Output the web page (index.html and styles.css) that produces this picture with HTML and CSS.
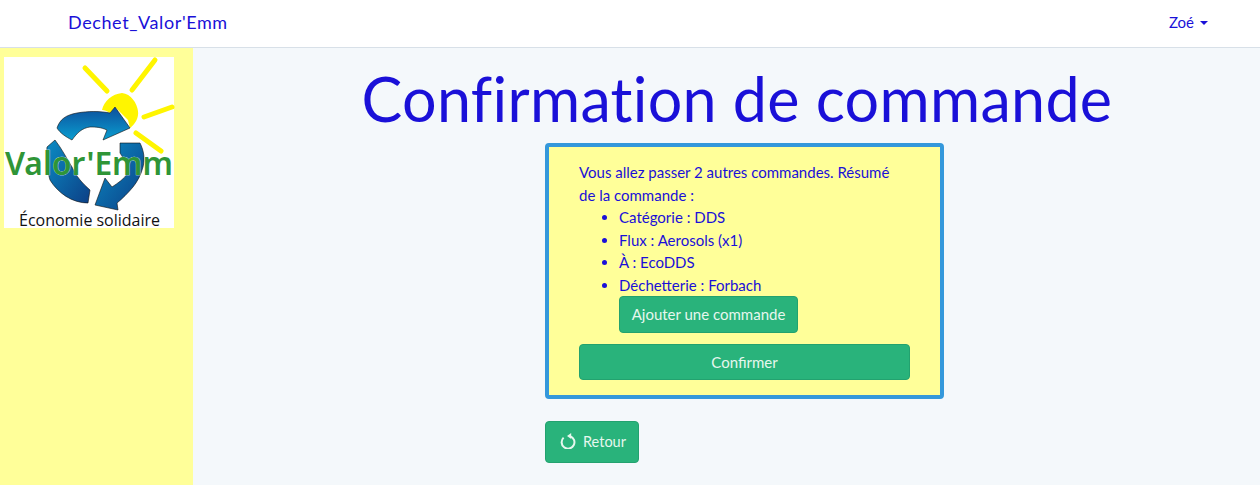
FILE: index.html
```html
<!DOCTYPE html>
<html lang="fr">
<head>
<meta charset="utf-8">
<title>Confirmation de commande</title>
<link rel="stylesheet" href="styles.css">
</head>
<body>
<nav class="navbar">
  <a class="brand" href="#">Dechet_Valor'Emm</a>
  <a class="user" href="#">Zoé <span class="caret"></span></a>
</nav>
<div class="layout">
  <aside class="sidebar">
    <svg class="logo" viewBox="0 0 170 171" role="img" aria-label="Valor'Emm">
      <defs>
        <linearGradient id="blue" x1="0" y1="0" x2="0" y2="1">
          <stop offset="0" stop-color="#0d4f9c"/>
          <stop offset="1" stop-color="#0a9ed0"/>
        </linearGradient>
        <linearGradient id="blue2" x1="0" y1="0" x2="1" y2="1">
          <stop offset="0" stop-color="#0b8cc4"/>
          <stop offset="1" stop-color="#0c3f86"/>
        </linearGradient>
      </defs>
      <rect width="170" height="171" fill="#fff"/>
      <path d="M98 53 C100 44 108 37 118 36 C127 37 133 46 134 54 C135 61 131 67 126 71 L124 63 L111 50 L106 56 C103 54 100 53 98 53Z" fill="#fff500"/>
      <g stroke="#fff500" stroke-width="5" stroke-linecap="round" fill="none">
        <path d="M81 11 L103 34"/>
        <path d="M151 3 L128 33"/>
        <path d="M140 60 L168 50"/>
        <path d="M132 76 L157 94"/>
      </g>
      <path d="M53 71 C56 62 62 58 73 56 C84 54 96 54 106 56 L111 50 L126 71 L99 83 L103 73 C96 70 92 70 86 70 C78 71 73 76 68 83 C62 80 56 76 53 71Z" fill="url(#blue)" stroke="#111" stroke-width=".6"/>
      <path d="M43 90 L51 83 C58 92 63 102 68 110 C72 119 78 126 86 133 L84 146 C68 146 54 136 46 123 C43 113 42 100 43 90Z" fill="url(#blue2)" stroke="#111" stroke-width=".6"/>
      <path d="M116 86 L136 86 C140 94 141 102 139 110 C137 118 133 125 129 130 C124 136 118 142 113 146 L114 153 L91 148 L101 121 L108 130 C114 126 120 122 124 116 C124 108 120 102 116 96Z" fill="url(#blue2)" stroke="#111" stroke-width=".6"/>
      <text class="logo-name" x="1" y="118" textLength="168" lengthAdjust="spacingAndGlyphs">Valor'Emm</text>
      <text class="logo-sub" x="15" y="169" textLength="141" lengthAdjust="spacingAndGlyphs">Économie solidaire</text>
    </svg>
  </aside>
  <main class="content">
    <h1 class="title">Confirmation de commande</h1>
    <div class="column">
      <section class="panel">
        <p class="intro">Vous allez passer 2 autres commandes. Résumé de la commande :</p>
        <ul class="summary">
          <li>Catégorie : DDS</li>
          <li>Flux : Aerosols (x1)</li>
          <li>À : EcoDDS</li>
          <li>Déchetterie : Forbach</li>
        </ul>
        <button class="btn btn-add" type="button">Ajouter une commande</button>
        <button class="btn btn-confirm" type="button">Confirmer</button>
      </section>
      <button class="btn btn-back" type="button">
        <svg class="back-icon" viewBox="0 0 16 16" aria-hidden="true">
          <path d="M3.6 4.6 A6.4 6.4 0 1 0 10.2 3.2" fill="none" stroke="currentColor" stroke-width="2"/>
          <path d="M7 3 L11.2 0 V6Z" fill="currentColor"/>
        </svg>
        Retour
      </button>
    </div>
  </main>
</div>
</body>
</html>
```
FILE: styles.css
```css
* { box-sizing: border-box; }
html, body { height: 100%; }
body {
  margin: 0;
  display: flex;
  flex-direction: column;
  overflow: hidden;
  background: #f4f8fb;
  color: #1a10d8;
  font: 15px/22.5px Lato, "Noto Sans", sans-serif;
}
.navbar {
  flex: none;
  height: 48px;
  padding: 0 52px 2px 68px;
  display: flex;
  align-items: center;
  justify-content: space-between;
  background: #fff;
  border-bottom: 1px solid #d8e0e8;
}
.navbar a { color: #1a10d8; text-decoration: none; }
.brand { font-size: 18px; letter-spacing: .6px; }
.user { font-size: 15px; display: flex; align-items: center; gap: 6px; }
.caret {
  width: 0;
  height: 0;
  border-left: 4px solid transparent;
  border-right: 4px solid transparent;
  border-top: 4px solid #1a10d8;
}
.layout { flex: 1; display: flex; min-height: 0; }
.sidebar {
  flex: none;
  width: 193px;
  padding: 9px 0 0 4px;
  background: #ffff99;
}
.logo { display: block; width: 170px; height: 171px; overflow: visible; }
.logo-name {
  font: 600 32px "Noto Sans", sans-serif;
  fill: #2f9537;
  stroke: #fff;
  stroke-width: .5px;
  paint-order: stroke;
}
.logo-sub { font: 400 16px "Open Sans", sans-serif; fill: #111; }
.content { flex: 1; min-width: 0; }
.title {
  margin: 16px 0 10px;
  padding-left: 21px;
  text-align: center;
  font-size: 61px;
  line-height: 69px;
  font-weight: 400;
  letter-spacing: .3px;
  color: #1a10d8;
}
.column { width: 399px; margin-left: 352px; }
.panel {
  height: 256px;
  padding: 14px 30px 0;
  background: #ffff99;
  border: 4px solid #3498db;
  border-radius: 4px;
}
.intro { margin: 0; padding-right: 12px; }
.summary { margin: 0; padding-left: 40px; }
.btn {
  display: block;
  padding: 0;
  color: #e6f7ee;
  background: #29b37b;
  border: 1px solid #23a26f;
  border-radius: 4px;
  font: inherit;
}
.btn-add { width: 179px; height: 37px; margin: 0 0 11px 40px; }
.btn-confirm { width: 331px; height: 36px; }
.btn-back {
  display: flex;
  align-items: center;
  gap: 7px;
  width: 94px;
  height: 42px;
  margin-top: 22px;
  padding-left: 14px;
  font-size: 14.5px;
}
.back-icon { width: 16px; height: 16px; margin-top: -3px; }
```
